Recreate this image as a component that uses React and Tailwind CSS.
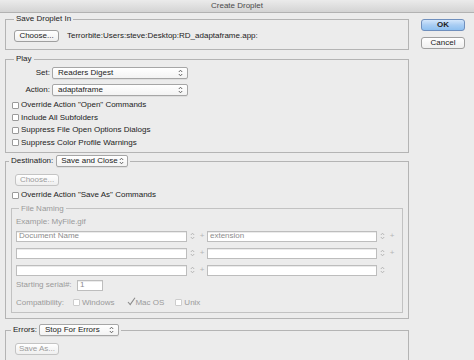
import React from "react";

const font = { fontFamily: '"Liberation Sans", Arial, sans-serif' };

function Arrows({ color = "#555" }) {
    return (
        <svg width="5" height="8" viewBox="0 0 5 8" className="shrink-0">
            <path d="M0.8 3 L2.5 1.2 L4.2 3" fill="none" stroke={color} strokeWidth="0.9" />
            <path d="M0.8 5 L2.5 6.8 L4.2 5" fill="none" stroke={color} strokeWidth="0.9" />
        </svg>
    );
}

function Select({ value, width, tight }) {
    return (
        <div
            className={`h-[12px] flex items-center justify-between ${tight ? "pl-[4px] pr-[3px]" : "pl-[5px] pr-[4px]"} bg-gradient-to-b from-white to-[#f3f3f3] border border-[#a6a6a6] rounded-[2px] text-[8px] leading-[10px] text-[#222] whitespace-nowrap shadow-[0_1px_0_rgba(0,0,0,0.06)]`}
            style={{ width }}
        >
            <span>{value}</span>
            <Arrows />
        </div>
    );
}

function Button({ children, disabled, className = "" }) {
    return (
        <div
            className={`h-[12px] flex items-center justify-center bg-gradient-to-b from-white to-[#efefef] border rounded-[3px] text-[8px] leading-[10px] whitespace-nowrap ${disabled ? "border-[#c4c4c4] text-[#9c9c9c]" : "border-[#9f9f9f] text-[#222]"} ${className}`}
        >
            {children}
        </div>
    );
}

function Checkbox({ label, checked, disabled }) {
    return (
        <div className="flex items-center h-[12.5px] whitespace-nowrap">
            <div className={`relative w-[7px] h-[7px] border rounded-[1px] ${checked ? "border-transparent bg-transparent" : "bg-white"} ${disabled ? "border-[#cdcdcd]" : "border-[#9a9a9a]"}`}>
                {checked && (
                    <svg width="9" height="9" viewBox="0 0 9 9" className="absolute -top-[3px] left-0">
                        <path d="M1 5 L3.2 7.5 L8 0.8" fill="none" stroke="#8a8a8a" strokeWidth="1.1" />
                    </svg>
                )}
            </div>
            <span className={`ml-[2px] text-[8px] leading-[10px] ${disabled ? "text-[#9a9a9a]" : "text-[#222]"}`}>{label}</span>
        </div>
    );
}

function Field({ width, value }) {
    return (
        <div
            className="h-[11px] bg-white border border-[#bdbdbd] flex items-center pl-[2px] text-[8px] leading-[10px] text-[#8c8c8c] shadow-[inset_0_1px_0_rgba(0,0,0,0.08)]"
            style={{ width }}
        >
            {value}
        </div>
    );
}

function Stepper() {
    return (
        <div className="w-[10px] h-[11px] flex items-center justify-center">
            <Arrows color="#b0b0b0" />
        </div>
    );
}

function Plus({ show = true }) {
    return (
        <div className="w-[10px] flex items-center justify-center text-[8px] leading-[10px] text-[#b5b5b5]">
            {show ? "+" : ""}
        </div>
    );
}

function NamingRow({ a, b, last }) {
    return (
        <div className="flex items-center">
            <Field width="171px" value={a} />
            <Stepper />
            <Plus />
            <Field width="170px" value={b} />
            <Stepper />
            <Plus show={!last} />
        </div>
    );
}

export default function App() {
    return (
        <div className="w-[474px] h-[360px] bg-[#ececec] overflow-hidden text-[#222]" style={font}>
            {/* Title bar */}
            <div className="h-[13px] bg-gradient-to-b from-[#ebebeb] to-[#d4d4d4] border-b border-[#b2b2b2] flex items-center justify-center text-[8px] leading-[10px] text-[#4a4a4a]">
                Create Droplet
            </div>

            <div className="flex pl-[5px]">
                <div className="w-[404px] flex flex-col">
                    {/* Save Droplet In */}
                    <fieldset className="mt-[1px] border border-[#b4b4b4] pl-[8px] pt-[6px] pb-[7px]">
                        <legend className="px-[2px] text-[8px] leading-[10px] text-[#222]">Save Droplet In</legend>
                        <div className="flex items-center">
                            <Button className="w-[45px]">Choose...</Button>
                            <span className="ml-[8px] text-[8px] leading-[10px]">Terrorbite:Users:steve:Desktop:RD_adaptaframe.app:</span>
                        </div>
                    </fieldset>

                    {/* Play */}
                    <fieldset className="mt-[4px] border border-[#b4b4b4] pl-[8px] pt-[3px] pb-[3px]">
                        <legend className="px-[2px] text-[8px] leading-[10px] text-[#222]">Play</legend>
                        <div className="flex items-center">
                            <span className="w-[36px] text-right text-[8px] leading-[10px]">Set:</span>
                            <div className="ml-[2px]">
                                <Select value="Readers Digest" width="136px" />
                            </div>
                        </div>
                        <div className="flex items-center mt-[5px]">
                            <span className="w-[36px] text-right text-[8px] leading-[10px]">Action:</span>
                            <div className="ml-[2px]">
                                <Select value="adaptaframe" width="136px" />
                            </div>
                        </div>
                        <div className="mt-[3px] -ml-[2px]">
                            <Checkbox label={'Override Action "Open" Commands'} />
                            <Checkbox label="Include All Subfolders" />
                            <Checkbox label="Suppress File Open Options Dialogs" />
                            <Checkbox label="Suppress Color Profile Warnings" />
                        </div>
                    </fieldset>

                    {/* Destination */}
                    <fieldset className="mt-[2px] border border-[#b4b4b4] pl-[5px] pr-[5px] pt-[7px] pb-[5px]">
                        <legend className="-ml-[2px] px-[2px]">
                            <span className="flex items-center whitespace-nowrap">
                                <span className="text-[8px] leading-[10px]">Destination:</span>
                                <span className="ml-[3px]">
                                    <Select value="Save and Close" width="72px" tight />
                                </span>
                            </span>
                        </legend>
                        <Button disabled className="w-[44px] ml-[4px]">Choose...</Button>
                        <div className="mt-[3px] ml-[1px]">
                            <Checkbox label={'Override Action "Save As" Commands'} />
                        </div>
                        <fieldset className="mt-[2px] border border-[#c2c2c2] pl-[4px] pt-[3px] pb-[3px]">
                            <legend className="ml-[3px] px-[2px] text-[8px] leading-[10px] text-[#9a9a9a]">File Naming</legend>
                            <div className="text-[8px] leading-[10px] text-[#9a9a9a]">Example: MyFile.gif</div>
                            <div className="mt-[4px] flex flex-col gap-[6px]">
                                <NamingRow a="Document Name" b="extension" />
                                <NamingRow a="" b="" />
                                <NamingRow a="" b="" last />
                            </div>
                            <div className="mt-[4px] flex items-center">
                                <span className="w-[61px] text-[8px] leading-[10px] text-[#9a9a9a] whitespace-nowrap">Starting serial#:</span>
                                <Field width="26px" value="1" />
                            </div>
                            <div className="mt-[6px] flex items-center gap-[5px]">
                                <span className="w-[52px] text-[8px] leading-[10px] text-[#9a9a9a] whitespace-nowrap">Compatibility:</span>
                                <Checkbox label="Windows" disabled />
                                <span className="ml-[7px]">
                                    <Checkbox label="Mac OS" checked disabled />
                                </span>
                                <span className="ml-[6px]">
                                    <Checkbox label="Unix" disabled />
                                </span>
                            </div>
                        </fieldset>
                    </fieldset>

                    {/* Errors */}
                    <fieldset className="mt-[5px] border border-[#b4b4b4] pl-[8px] pt-[7px] pb-[5px]">
                        <legend className="-ml-[3px] px-[2px]">
                            <span className="flex items-center whitespace-nowrap">
                                <span className="text-[8px] leading-[10px]">Errors:</span>
                                <span className="ml-[2px]">
                                    <Select value="Stop For Errors" width="80px" />
                                </span>
                            </span>
                        </legend>
                        <Button disabled className="w-[44px] ml-[1px]">Save As...</Button>
                    </fieldset>
                </div>

                {/* Right buttons */}
                <div className="ml-[12px] w-[44px] flex flex-col pt-[6px] gap-[6px]">
                    <div className="h-[12px] flex items-center justify-center rounded-[3px] border border-[#6f8fbd] bg-gradient-to-b from-[#d3e6fb] via-[#a9cdf3] to-[#8ec0f0] text-[8px] leading-[10px] font-bold text-[#1e1e1e]">
                        OK
                    </div>
                    <Button>Cancel</Button>
                </div>
            </div>
        </div>
    );
}
